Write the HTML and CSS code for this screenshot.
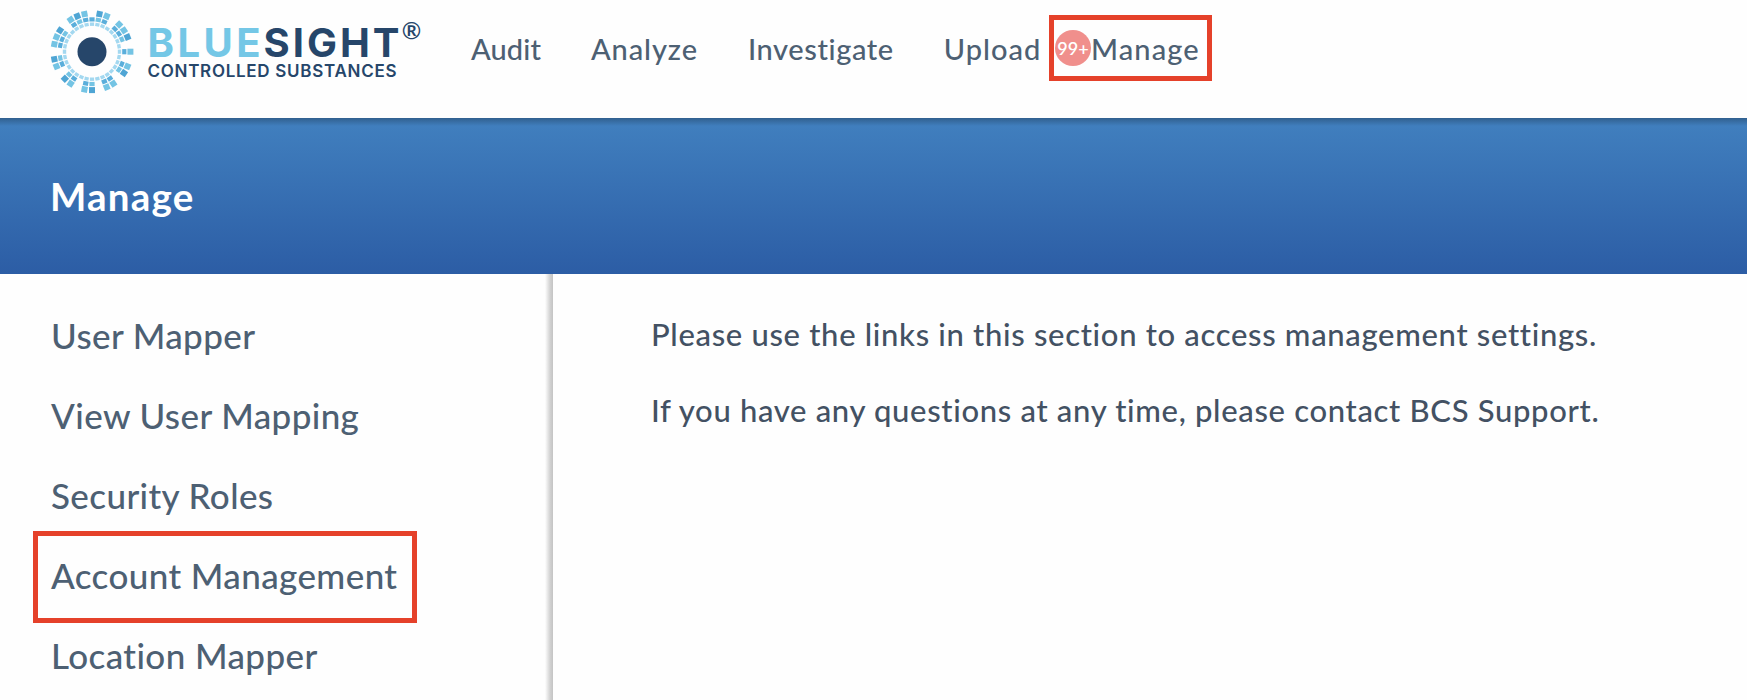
FILE: index.html
```html
<!DOCTYPE html>
<html lang="en">
<head>
    <meta charset="UTF-8">
    <meta name="viewport" content="width=device-width, initial-scale=1.0">
    <title>Manage - Bluesight Controlled Substances</title>
    <link rel="stylesheet" href="styles.css">
</head>
<body>
    <header class="topbar">
        <a href="#" class="logo">
            <svg width="380" height="98" viewBox="0 0 380 98">
                <defs>
                    <rect id="o" x="-3" y="-41.4" width="6" height="6"/>
                    <rect id="m" x="-2.6" y="-34.4" width="5.2" height="4.2"/>
                    <rect id="i" x="-2.1" y="-29.2" width="4.2" height="3.4"/>
                    <!-- full spokes: light and dark outer block -->
                    <g id="l"><use href="#o" fill="#74c4e4"/><use href="#m" fill="#5aaedb"/></g>
                    <g id="d"><use href="#o" fill="#4fa5d4"/><use href="#m" fill="#74c4e4"/></g>
                    <g id="q">
                        <use href="#i"/>
                        <use href="#i" transform="rotate(11.25)"/>
                        <use href="#i" transform="rotate(22.5)"/>
                        <use href="#i" transform="rotate(33.75)"/>
                        <use href="#i" transform="rotate(45)"/>
                        <use href="#i" transform="rotate(56.25)"/>
                        <use href="#i" transform="rotate(67.5)"/>
                        <use href="#i" transform="rotate(78.75)"/>
                    </g>
                </defs>
                <g transform="translate(42 51.7)">
                    <circle r="14.5" fill="#26466a"/>
                    <g fill="#a3d8f0">
                        <use href="#q"/>
                        <use href="#q" transform="rotate(90)"/>
                        <use href="#q" transform="rotate(180)"/>
                        <use href="#q" transform="rotate(270)"/>
                    </g>
                    <use href="#m" fill="#5aaedb"/>
                    <use href="#d" transform="rotate(11.25)"/>
                    <use href="#l" transform="rotate(22.5)"/>
                    <use href="#l" transform="rotate(45)"/>
                    <use href="#l" transform="rotate(56.25)"/>
                    <use href="#d" transform="rotate(67.5)"/>
                    <use href="#l" transform="rotate(90)"/>
                    <use href="#l" transform="rotate(112.5)"/>
                    <use href="#d" transform="rotate(123.75)"/>
                    <use href="#l" transform="rotate(146.25)"/>
                    <use href="#l" transform="rotate(157.5)"/>
                    <use href="#d" transform="rotate(180)"/>
                    <use href="#l" transform="rotate(191.25)"/>
                    <use href="#l" transform="rotate(213.75)"/>
                    <use href="#d" transform="rotate(225)"/>
                    <use href="#l" transform="rotate(247.5)"/>
                    <use href="#d" transform="rotate(258.75)"/>
                    <use href="#l" transform="rotate(281.25)"/>
                    <use href="#l" transform="rotate(292.5)"/>
                    <use href="#d" transform="rotate(303.75)"/>
                    <use href="#l" transform="rotate(326.25)"/>
                    <use href="#d" transform="rotate(337.5)"/>
                    <use href="#l" transform="rotate(348.75)"/>
                </g>
                <text class="logo-name logo-blue" x="97.5" y="57" textLength="113">BLUE</text>
                <text class="logo-name logo-navy" x="213.5" y="57" textLength="136">SIGHT</text>
                <text class="logo-reg" x="361.6" y="38.5">®</text>
                <text class="logo-sub" x="97.5" y="77" textLength="249">CONTROLLED SUBSTANCES</text>
            </svg>
        </a>
        <nav class="nav">
            <a href="#" class="nav-audit">Audit</a>
            <a href="#" class="nav-analyze">Analyze</a>
            <a href="#" class="nav-investigate">Investigate</a>
            <a href="#" class="nav-upload">Upload</a>
        </nav>
        <a href="#" class="nav-manage">
            <span class="badge">99+</span>
            <span class="nav-label">Manage</span>
        </a>
    </header>

    <div class="page-title">
        <h1>Manage</h1>
    </div>

    <div class="main">
        <ul class="sidebar">
            <li><a href="#">User Mapper</a></li>
            <li><a href="#">View User Mapping</a></li>
            <li><a href="#">Security Roles</a></li>
            <li class="highlight"><a href="#">Account Management</a></li>
            <li><a href="#">Location Mapper</a></li>
        </ul>
        <div class="content">
            <p>Please use the links in this section to access management settings.</p>
            <p>If you have any questions at any time, please contact BCS Support.</p>
        </div>
    </div>
</body>
</html>
```
FILE: styles.css
```css
* {
    box-sizing: border-box;
}
body {
    margin: 0;
    height: 700px;
    overflow: hidden;
    display: flex;
    flex-direction: column;
    font-family: Lato, "Liberation Sans", sans-serif;
    font-weight: 500;
    font-variant-ligatures: none;
    color: #435163;
    background: #fefefe;
}
a {
    color: #4d6073;
    text-decoration: none;
}
.topbar {
    display: flex;
    align-items: flex-start;
    flex: none;
    height: 118px;
    padding-left: 50px;
}
.logo {
    width: 421px;
    height: 98px;
}
.logo-name {
    font-family: Inter, sans-serif;
    font-size: 40px;
    font-weight: 700;
}
.logo-blue {
    fill: #74c7e6;
}
.logo-navy {
    fill: #26466a;
}
.logo-reg {
    font-size: 23.5px;
    font-weight: 600;
    text-anchor: middle;
    fill: #26466a;
}
.logo-sub {
    font-family: Inter, sans-serif;
    font-size: 17px;
    font-weight: 600;
    fill: #26466a;
}
.nav {
    display: flex;
    gap: 50px;
    width: 578px;
    font-size: 29px;
    line-height: 98px;
    white-space: nowrap;
}
.nav-audit {
    letter-spacing: 0.1px;
}
.nav-analyze {
    letter-spacing: 0.9px;
}
.nav-investigate {
    letter-spacing: 0.6px;
}
.nav-upload {
    letter-spacing: 1px;
}
.nav-manage {
    display: flex;
    align-items: center;
    width: 163px;
    height: 66px;
    margin-top: 15px;
    padding-left: 1px;
    border: 5px solid #e5412a;
    font-size: 29px;
    line-height: 58px;
}
.nav-label {
    padding-top: 2px;
    letter-spacing: 1.1px;
}
.badge {
    width: 36px;
    height: 36px;
    border-radius: 50%;
    background: #f08f8c;
    color: white;
    font-size: 18px;
    font-weight: 600;
    line-height: 36px;
    text-align: center;
}
.page-title {
    flex: none;
    height: 156px;
    padding-left: 50px;
    background: linear-gradient(rgba(0, 0, 0, 0.25), transparent 8px), linear-gradient(#4180bf, #2c5da5);
}
.page-title h1 {
    margin: 0;
    color: white;
    font-size: 38.5px;
    font-weight: 700;
    letter-spacing: 1.2px;
    line-height: 156px;
}
.main {
    display: flex;
    flex: 1;
}
.sidebar {
    width: 553px;
    margin: 0;
    padding: 20px 0 0 33px;
    list-style: none;
    font-size: 35px;
    letter-spacing: 0.4px;
    line-height: 82px;
    background: linear-gradient(to left, #c4c4c4, #d2d2d2 3px, #fefefe 8px);
}
.sidebar li {
    height: 80px;
    padding-left: 18px;
    white-space: nowrap;
}
/* the frame is taller than its row */
.sidebar .highlight {
    width: 384px;
    height: 92px;
    margin: -3px 0 -9px;
    padding-left: 13px;
    border: 5px solid #e5412a;
    line-height: 78px;
}
.content {
    padding: 42px 0 0 98px;
    font-size: 31px;
    letter-spacing: 0.68px;
    line-height: 37px;
    white-space: nowrap;
}
.content p {
    margin: 0 0 39px;
}
```
